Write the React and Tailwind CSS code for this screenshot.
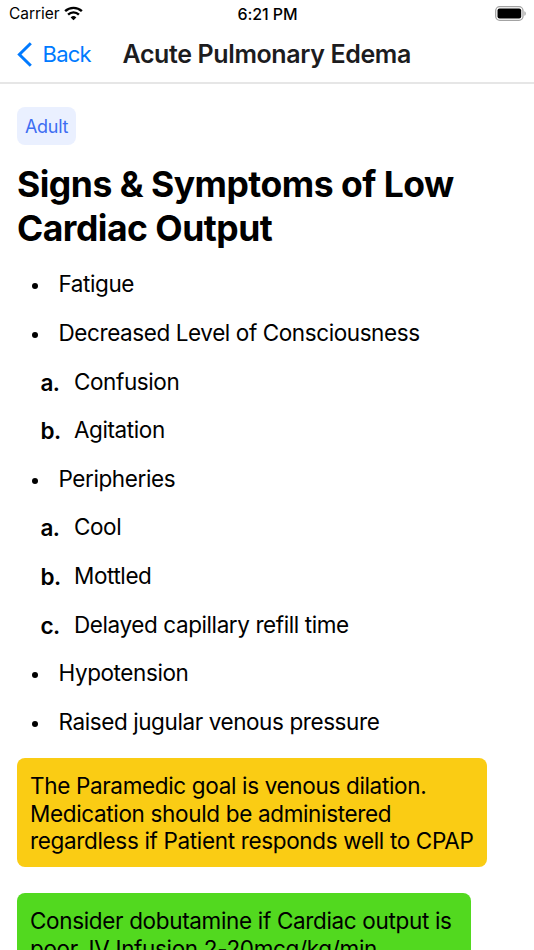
import React from "react";

const items = [
  { type: "bullet", text: "Fatigue" },
  { type: "bullet", text: "Decreased Level of Consciousness" },
  { type: "alpha", marker: "a.", text: "Confusion" },
  { type: "alpha", marker: "b.", text: "Agitation" },
  { type: "bullet", text: "Peripheries" },
  { type: "alpha", marker: "a.", text: "Cool" },
  { type: "alpha", marker: "b.", text: "Mottled" },
  { type: "alpha", marker: "c.", text: "Delayed capillary refill time" },
  { type: "bullet", text: "Hypotension" },
  { type: "bullet", text: "Raised jugular venous pressure" },
];

const WifiIcon = () => (
  <svg className="w-[19px] h-[15px]" viewBox="0 0 20 15" fill="none" stroke="#000" strokeWidth="2.5">
    <path d="M1.2 5.1 A12.6 12.6 0 0 1 18.8 5.1" />
    <path d="M4.3 8.6 A8.2 8.2 0 0 1 15.7 8.6" />
    <path d="M10 14.6 L7 11.6 A4.3 4.3 0 0 1 13 11.6 Z" fill="#000" stroke="none" />
  </svg>
);

const BatteryIcon = () => (
  <svg className="w-[32px] h-[15px]" viewBox="0 0 32 15">
    <rect x="0.7" y="0.7" width="27.3" height="13.6" rx="4" fill="none" stroke="#a3a3a3" strokeWidth="1.3" />
    <rect x="2.5" y="2.5" width="23.7" height="10" rx="2" fill="#000" />
    <path d="M29.4 5.2 C31.2 5.8 31.2 9.2 29.4 9.8 Z" fill="#a3a3a3" />
  </svg>
);

const StatusBar = () => (
  <div className="grid grid-cols-3 items-center h-[27px] pl-[8px] pr-[7px] text-black">
    <div className="flex items-center gap-[5px] pl-px">
      <span className="text-[15.5px] leading-5 tracking-[-0.05px]">Carrier</span>
      <WifiIcon />
    </div>
    <span className="text-center text-[16px] leading-5 tracking-[-0.05px] font-medium">6:21 PM</span>
    <div className="flex justify-end">
      <BatteryIcon />
    </div>
  </div>
);

const NavBar = () => (
  <header className="flex items-center h-[57px] pl-[17px] pb-px border-b-2 border-[#e6e6e6]">
    <button className="flex items-center text-[#007aff]">
      <svg className="w-[15px] h-[25px]" viewBox="0 0 15 25" fill="none" stroke="currentColor" strokeWidth="3">
        <path d="M13.8 1.2 L2.4 12.5 L13.8 23.8" />
      </svg>
      <span className="ml-[10.5px] w-[80px] text-left text-[22px] tracking-[-0.75px]">Back</span>
    </button>
    <h1 className="text-[25px] leading-[30px] tracking-[-0.38px] font-semibold text-[#1c1c1e]">
      Acute Pulmonary Edema
    </h1>
  </header>
);

const ListItem = ({ item }) => (
  <li className="flex items-center h-[48.6px] tracking-[-0.41px]">
    {item.type === "bullet" ? (
      <>
        <span className="ml-[15px] mt-[4px] size-[6px] rounded-full bg-black" />
        <span className="ml-[20.5px]">{item.text}</span>
      </>
    ) : (
      <>
        <span className="ml-[23.5px] mt-[2px] w-[33.5px] tracking-[-0.6px] font-semibold">{item.marker}</span>
        <span>{item.text}</span>
      </>
    )}
  </li>
);

const Callout = ({ className, lines }) => (
  <div className={`rounded-[8px] px-[13px] pt-[14px] pb-[12px] leading-[27.7px] ${className}`}>
    {lines.map((line) => (
      <p key={line} className="whitespace-nowrap">{line}</p>
    ))}
  </div>
);

export default function App() {
  return (
    <div className="h-screen overflow-hidden bg-white font-['Inter',sans-serif]">
      <StatusBar />
      <NavBar />
      <main className="px-[17px] pt-[23px] text-[22.5px] text-black">
        <div className="flex items-center w-fit h-[38px] px-[8px] rounded-[8px] bg-[#eaf0ff] text-[18px] tracking-[-0.3px] text-[#3d6df2]">
          Adult
        </div>
        <h2 className="mt-[18px] text-[35.5px] leading-[44px] tracking-[-0.5px] font-bold">
          Signs & Symptoms of Low
          <br />
          Cardiac Output
        </h2>
        <ul className="mt-[9px]">
          {items.map((item, i) => (
            <ListItem key={i} item={item} />
          ))}
        </ul>
        <Callout
          className="mt-[12px] w-[470px] bg-[#facc14] tracking-[-0.34px]"
          lines={[
            "The Paramedic goal is venous dilation.",
            "Medication should be administered",
            "regardless if Patient responds well to CPAP",
          ]}
        />
        <Callout
          className="mt-[26px] w-[454px] bg-[#52d91f] tracking-[-0.34px]"
          lines={["Consider dobutamine if Cardiac output is", "poor. IV Infusion 2-20mcg/kg/min"]}
        />
      </main>
    </div>
  );
}
